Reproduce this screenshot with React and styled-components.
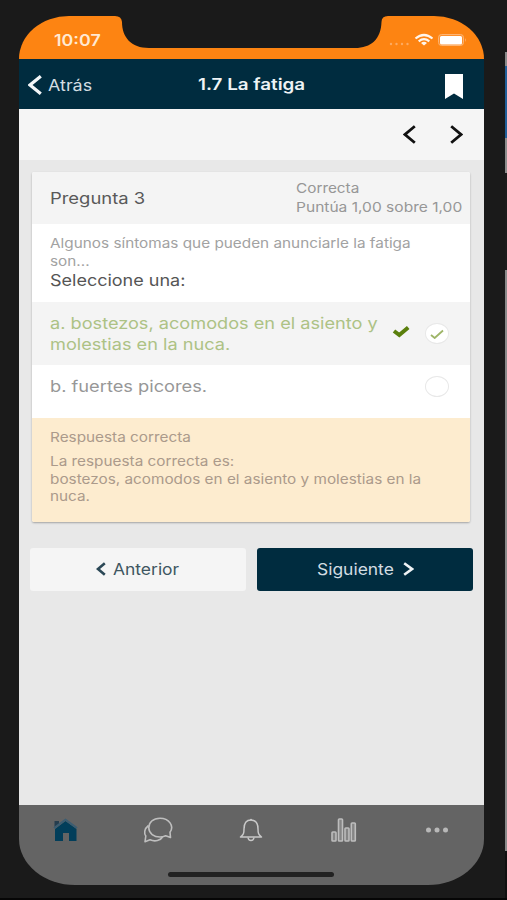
import styled, { createGlobalStyle } from 'styled-components';

const GlobalStyle = createGlobalStyle`
    * { box-sizing: border-box; }
    body {
        margin: 0;
        background: #1a1a1a;
        font-family: Inter, "Liberation Sans", sans-serif;
    }
    svg { display: block; flex: none; }
`

const Stage = styled.div`
    position: relative;
    height: 900px;
    padding: 16px 22.5px 0 19px;
    background: #1a1a1a;
    border-bottom: 2px solid #060606;
    overflow: hidden;
`

// slice of the desktop behind the phone
const Desktop = styled.div`
    position: absolute;
    top: 0;
    right: 0;
    width: 2px;
    height: 100%;
    background: linear-gradient(#1a1a1a 52px, #8a8a8a 52px 66px, #22609a 66px 138px, #8d8d8d 138px 173px, #1c1c1c 173px 270px, #8a8a8a 270px 851px, #101010 851px);
`

const Phone = styled.div`
    display: flex;
    flex-direction: column;
    width: 465px;
    height: 869px;
    border-radius: 50px 50px 56px 56px / 43px 43px 46px 46px;
    overflow: hidden;
`

const StatusBar = styled.div`
    position: relative;
    flex: none;
    display: flex;
    justify-content: space-between;
    height: 43px;
    padding: 15px 17px 0 35px;
    background: #fd8412;
`

const Notch = styled.svg`
    position: absolute;
    top: 0;
    left: 0;
`

// iOS face is a bit wider than Inter, so lines are widened by $wide
const Text = styled.span`
    display: block;
    width: max-content;
    white-space: nowrap;
    font-size: ${(p) => p.$size || 16}px;
    line-height: ${(p) => p.$line || 20}px;
    font-weight: ${(p) => p.$weight || 400};
    color: ${(p) => p.$color || '#979797'};
    transform: scaleX(${(p) => p.$wide || 1.135});
    transform-origin: ${(p) => p.$origin || 'left'} center;
`

const StatusIcons = styled.div`
    display: flex;
    gap: 4px;
`

const NavBar = styled.div`
    flex: none;
    display: grid;
    grid-template-columns: 1fr auto 1fr;
    height: 50px;
    padding: 0 21px 0 9px;
    background: #002c3f;
`

const Back = styled.div`
    display: flex;
    gap: 6px;
    padding-top: 16px;
`

const Title = styled.div`
    padding: 15px 0 0 13px;
`

const Bookmark = styled.svg`
    justify-self: end;
    margin-top: 15px;
`

const Pager = styled.div`
    flex: none;
    display: flex;
    justify-content: flex-end;
    gap: 34px;
    height: 51px;
    padding: 16px 21px 0 0;
    background: #f5f5f5;
`

const Content = styled.div`
    flex: 1;
    padding: 11.5px 11px 0 11px;
    background: #e8e8e8;
`

const Card = styled.div`
    margin: 0 3px 0 2px;
    background: #fff;
    border-radius: 2px;
    box-shadow: 0 1px 2px rgba(0, 0, 0, 0.3);
    overflow: hidden;
`

const CardHeader = styled.div`
    display: flex;
    justify-content: space-between;
    height: 52.5px;
    padding: 7px 8px 0 18px;
    background: #f4f4f4;
`

const Name = styled.div`
    padding-top: 9px;
`

const Score = styled.div`
    width: 166px;
`

const Question = styled.div`
    height: 77.5px;
    padding: 11px 18px 0;
`

const Option = styled.div`
    display: flex;
    justify-content: space-between;
    height: ${(p) => p.$height}px;
    padding: 11px 21px 0 18px;
    background: ${(p) => (p.$selected ? '#f4f4f4' : '#fff')};
`

const Marks = styled.div`
    display: flex;
    gap: 15px;
`

const Radio = styled.div`
    display: grid;
    place-items: center;
    width: 24px;
    height: 21px;
    border: 1px solid #e8e8e8;
    border-radius: 50%;
    background: #fff;
    margin-top: ${(p) => p.$top || 0}px;
`

const Feedback = styled.div`
    height: 104px;
    padding: 11px 18px 0;
    background: #fdeccf;
`

const FeedbackTitle = styled.div`
    margin-bottom: 7px;
`

const Buttons = styled.div`
    display: grid;
    grid-template-columns: 1fr 1fr;
    gap: 11.5px;
    margin-top: 25.5px;
`

const Button = styled.button`
    display: flex;
    align-items: center;
    height: 43.5px;
    padding: 0 0 0 ${(p) => p.$left}px;
    border: 0;
    border-radius: 3px;
    font-family: inherit;
    background: ${(p) => (p.$primary ? '#002c3f' : '#f5f5f5')};
    gap: ${(p) => p.$gap}px;
`

const TabBar = styled.div`
    flex: none;
    display: grid;
    grid-template-columns: repeat(5, 1fr);
    grid-template-rows: 50px 1fr;
    justify-items: center;
    align-items: center;
    height: 80px;
    padding-right: 1px;
    background: #646464;
`

const HomeIndicator = styled.div`
    grid-column: 1 / -1;
    align-self: start;
    width: 166px;
    height: 5px;
    margin-top: 17px;
    border-radius: 3px;
    background: #222;
`

const Chevron = ({ dir, w, h, color, stroke }) => (
    <svg width={w} height={h} viewBox={`0 0 ${w} ${h}`} fill="none" stroke={color} strokeWidth={stroke}>
        {dir === 'left'
            ? <path d={`M${w - 1.2} 1.2 L2 ${h / 2} L${w - 1.2} ${h - 1.2}`} />
            : <path d={`M1.2 1.2 L${w - 2} ${h / 2} L1.2 ${h - 1.2}`} />}
    </svg>
)

const App = () => {
    return (
        <Stage>
            <GlobalStyle />
            <Desktop />
            <Phone>
                <StatusBar>
                    <Notch width="466" height="33" viewBox="0 0 466 33">
                        <path fill="#1a1a1a" d="M96 -1 V0 Q102.500 0 103 6 C103 21 112 32 130 32 H336 C352 32 362 23 362.500 6 Q362.500 0 369 0 V-1 Z" />
                    </Notch>
                    <Text $size={15.5} $weight={600} $color="#ffe9d2" $line={19} $wide={1.15}>10:07</Text>
                    <StatusIcons>
                        <svg width="22" height="17" fill="#fdab61">
                            <circle cx="3" cy="13" r="1.200" /><circle cx="8.500" cy="13" r="1.200" />
                            <circle cx="14" cy="13" r="1.200" /><circle cx="19.500" cy="13" r="1.200" />
                        </svg>
                        <svg width="20" height="17" viewBox="0 0 20 17" fill="none" stroke="#fff5ea" strokeWidth="2.200">
                            <path d="M1.500 7.500 Q10 .5 18.500 7.500" />
                            <path d="M4.700 10.400 Q10 6 15.300 10.400" />
                            <path d="M7 12 Q10 9.600 13 12 L10 14.500 Z" fill="#fff5ea" stroke="none" />
                        </svg>
                        <svg width="29" height="17" viewBox="0 0 29 17">
                            <rect x=".5" y="3.500" width="25" height="11" rx="3" fill="#fd8f2c" stroke="#fdb473" />
                            <rect x="2" y="5" width="22" height="8.500" rx="1.500" fill="#fff" />
                            <path d="M27.200 7 Q29 9 27.200 11 Z" fill="#fdb473" />
                        </svg>
                    </StatusIcons>
                </StatusBar>
                <NavBar>
                    <Back>
                        <Chevron dir="left" w={14} h={20} color="#f2f6f8" stroke={3.2} />
                        <Text $color="#d3dde2" $line={21} $wide={1.12}>Atrás</Text>
                    </Back>
                    <Title>
                        <Text $weight={600} $color="#eef3f5" $origin="center" $wide={1.175}>1.7 La fatiga</Text>
                    </Title>
                    <Bookmark width="18" height="25" viewBox="0 0 18 25">
                        <path fill="#fff" d="M0 0 H18 V25 L9 19.500 L0 25 Z" />
                    </Bookmark>
                </NavBar>
                <Pager>
                    <Chevron dir="left" w={13} h={19} color="#111" stroke={2.8} />
                    <Chevron dir="right" w={13} h={19} color="#111" stroke={2.8} />
                </Pager>
                <Content>
                    <Card>
                        <CardHeader>
                            <Name><Text $color="#595959" $wide={1.15}>Pregunta 3</Text></Name>
                            <Score>
                                <Text $size={13.5} $line={19}>Correcta</Text>
                                <Text $size={13.5} $line={19} $wide={1.152}>Puntúa 1,00 sobre 1,00</Text>
                            </Score>
                        </CardHeader>
                        <Question>
                            <Text $size={13.5} $line={17.5} $color="#a2a2a2">Algunos síntomas que pueden anunciarle la fatiga</Text>
                            <Text $size={13.5} $line={17.5} $color="#a2a2a2">son...</Text>
                            <Text $color="#555" $wide={1.125}>Seleccione una:</Text>
                        </Question>
                        <Option $selected $height={63.5}>
                            <div>
                                <Text $color="#adc285" $line={21}>a. bostezos, acomodos en el asiento y</Text>
                                <Text $color="#adc285" $line={21}>molestias en la nuca.</Text>
                            </div>
                            <Marks>
                                <svg width="18" height="40" viewBox="0 0 18 40" fill="none" stroke="#5a7f0c" strokeWidth="4">
                                    <path d="M2 18 L7.300 22 L16.200 14.500" />
                                </svg>
                                <Radio $top={10.5}>
                                    <svg width="14" height="11" viewBox="0 0 14 11" fill="none" stroke="#9eb568" strokeWidth="1.800">
                                        <path d="M1 7 L4.700 10 L13 2.500" />
                                    </svg>
                                </Radio>
                            </Marks>
                        </Option>
                        <Option $height={53}>
                            <Text $line={21} $wide={1.14}>b. fuertes picores.</Text>
                            <Radio />
                        </Option>
                        <Feedback>
                            <FeedbackTitle><Text $size={13.5} $line={17} $color="#ab9a8b">Respuesta correcta</Text></FeedbackTitle>
                            <Text $size={13.5} $line={17.5} $color="#ab9a8b">La respuesta correcta es:</Text>
                            <Text $size={13.5} $line={17.5} $color="#ab9a8b">bostezos, acomodos en el asiento y molestias en la</Text>
                            <Text $size={13.5} $line={17.5} $color="#ab9a8b">nuca.</Text>
                        </Feedback>
                    </Card>
                    <Buttons>
                        <Button $left={66} $gap={7}>
                            <Chevron dir="left" w={10} h={14} color="#2b4856" stroke={2.6} />
                            <Text $color="#3e5661" $wide={1.09}>Anterior</Text>
                        </Button>
                        <Button $primary $left={60} $gap={15}>
                            <Text $color="#d3dde2" $wide={1.09}>Siguiente</Text>
                            <Chevron dir="right" w={11} h={14} color="#eef3f5" stroke={2.6} />
                        </Button>
                    </Buttons>
                </Content>
                <TabBar>
                    <svg width="25" height="24" viewBox="0 0 25 24">
                        <path fill="#253d4e" d="M1.500 3 H6 V6 L1.500 10 Z" />
                        <path fill="#023e5a" d="M2 11 L12.500 3 L23.500 11 V23 H16 V15 H10 V23 H2 Z" />
                        <path fill="none" stroke="#3c5d72" strokeWidth="2" d="M1 10 L12.500 1.800 L24 10" />
                    </svg>
                    <svg width="30" height="26" viewBox="0 0 30 26" fill="none" stroke="#bebebe" strokeWidth="1.600" strokeLinejoin="round">
                        <path d="M17 1.200 C10 1.200 5.800 5.500 5.800 10.800 C5.800 16.500 11 20 17 20 C19.500 20 21.300 19.300 22.700 18.700 L27.500 20.500 L27 15.200 C31.500 9 26 1.200 17 1.200 Z" />
                        <path d="M5.500 8.500 C1 12 1 16.500 2.800 19 L2 24.800 L7 22.800 C12 25 17.500 23.500 19.500 20" />
                    </svg>
                    <svg width="24" height="24" viewBox="0 0 24 24" fill="none" stroke="#c8c8c8" strokeWidth="1.500" strokeLinejoin="round">
                        <path d="M12 2 C6 2 5 7 5 11 C5 15.500 4.500 16.500 1.500 19 H22.500 C19.500 16.500 19 15.500 19 11 C19 7 18 2 12 2 Z" />
                        <path d="M9 19.500 C9.500 23.500 14.500 23.500 15 19.500" />
                        <circle cx="12" cy="1.800" r="1" fill="#c8c8c8" stroke="none" />
                    </svg>
                    <svg width="26" height="24" viewBox="0 0 26 24" fill="#858585" stroke="#bdbdbd" strokeWidth="1.600">
                        <rect x="1" y="14" width="4" height="9" rx=".8" />
                        <rect x="7.500" y="1" width="4" height="22" rx=".8" />
                        <rect x="14" y="10" width="4" height="13" rx=".8" />
                        <rect x="20.300" y="5" width="4" height="18" rx=".8" />
                    </svg>
                    <svg width="24" height="8" fill="#b8b8b8">
                        <circle cx="3.500" cy="4" r="2.500" /><circle cx="12" cy="4" r="2.500" /><circle cx="20.500" cy="4" r="2.500" />
                    </svg>
                    <HomeIndicator />
                </TabBar>
            </Phone>
        </Stage>
    )
}

export default App
